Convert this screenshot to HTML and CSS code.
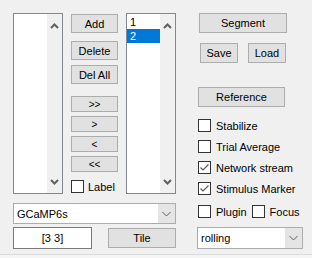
FILE: index.html
```html
<!DOCTYPE html>
<html lang="en">
<head>
  <meta charset="UTF-8">
  <title>Imaging Panel</title>
  <link rel="stylesheet" href="styles.css">
</head>
<body>

  <div class="window">
    <div class="left">
      <div class="lists">
        <div class="listbox">
          <div class="items"></div>
          <div class="scroll">
            <svg width="15" height="12" viewBox="0 0 15 12"><polyline points="4,9 7.5,5.5 11,9" fill="none" stroke="#606060" stroke-width="2"/></svg>
            <svg width="15" height="12" viewBox="0 0 15 12"><polyline points="4,3 7.5,6.5 11,3" fill="none" stroke="#606060" stroke-width="2"/></svg>
          </div>
        </div>

        <div class="buttons">
          <button class="btn tall">Add</button>
          <button class="btn tall gap-big">Delete</button>
          <button class="btn tall">Del All</button>
          <button class="btn small first">&gt;&gt;</button>
          <button class="btn small">&gt;</button>
          <button class="btn small">&lt;</button>
          <button class="btn small">&lt;&lt;</button>
          <label class="check label-check"><span class="box"></span>Label</label>
        </div>

        <div class="listbox">
          <div class="items">
            <div class="item">1</div>
            <div class="item selected">2</div>
          </div>
          <div class="scroll">
            <svg width="15" height="12" viewBox="0 0 15 12"><polyline points="4,9 7.5,5.5 11,9" fill="none" stroke="#606060" stroke-width="2"/></svg>
            <svg width="15" height="12" viewBox="0 0 15 12"><polyline points="4,3 7.5,6.5 11,3" fill="none" stroke="#606060" stroke-width="2"/></svg>
          </div>
        </div>
      </div>

      <div class="select wide">
        <span class="select-text">GCaMP6s</span>
        <span class="select-arrow">
          <svg width="9" height="6" viewBox="0 0 9 6"><polyline points="0.5,1 4.5,5 8.5,1" fill="none" stroke="#606060" stroke-width="1"/></svg>
        </span>
      </div>

      <div class="tile-row">
        <div class="field">[3 3]</div>
        <button class="btn tile">Tile</button>
      </div>
    </div>

    <div class="right">
      <button class="btn segment">Segment</button>
      <div class="save-row">
        <button class="btn save">Save</button>
        <button class="btn load">Load</button>
      </div>
      <button class="btn reference">Reference</button>

      <div class="checks">
        <label class="check"><span class="box"></span>Stabilize</label>
        <label class="check"><span class="box"></span>Trial Average</label>
        <label class="check"><span class="box checked"><svg width="11" height="11" viewBox="0 0 11 11"><polyline points="1.5,5.5 4,8 9.5,2.5" fill="none" stroke="#5a5a5a" stroke-width="1.2"/></svg></span>Network stream</label>
        <label class="check"><span class="box checked"><svg width="11" height="11" viewBox="0 0 11 11"><polyline points="1.5,5.5 4,8 9.5,2.5" fill="none" stroke="#5a5a5a" stroke-width="1.2"/></svg></span>Stimulus Marker</label>
        <div class="check-pair">
          <label class="check"><span class="box"></span>Plugin</label>
          <label class="check"><span class="box"></span>Focus</label>
        </div>
      </div>

      <div class="select rolling">
        <span class="select-text">rolling</span>
        <span class="select-arrow">
          <svg width="9" height="6" viewBox="0 0 9 6"><polyline points="0.5,1 4.5,5 8.5,1" fill="none" stroke="#606060" stroke-width="1"/></svg>
        </span>
      </div>
    </div>
  </div>

</body>
</html>
```

FILE: styles.css
```css
* {
  box-sizing: border-box;
}

body {
  margin: 0;
  width: 312px;
  height: 258px;
  background: #f5f5f5;
  font-family: 'Liberation Sans', Arial, sans-serif;
  font-size: 11px;
  color: #000;
  overflow: hidden;
}

.window {
  display: flex;
  height: 255px;
  padding: 13px 0 0 13px;
  background: #f0f0f0;
  border-bottom: 1px solid #dadada;
}

.left {
  width: 163px;
  display: flex;
  flex-direction: column;
}

.lists {
  display: flex;
  height: 181px;
}

.listbox {
  width: 50px;
  height: 181px;
  border: 1px solid #828790;
  background: #fff;
  display: flex;
}

.items {
  flex: 1;
  padding-top: 1px;
}

.item {
  height: 14px;
  line-height: 14px;
  padding-left: 3px;
}

.item.selected {
  background: #0078d7;
  color: #fff;
}

.scroll {
  width: 15px;
  background: #f0f0f0;
  display: flex;
  flex-direction: column;
  justify-content: space-between;
  padding: 5px 0 4px;
}

.scroll svg {
  display: block;
}

.btn {
  font: inherit;
  color: #000;
  background: #e1e1e1;
  border: 1px solid #adadad;
  padding: 0;
  margin: 0;
  display: flex;
  align-items: center;
  justify-content: center;
}

.buttons {
  width: 47px;
  margin: 0 8px;
  padding-top: 1px;
  display: flex;
  flex-direction: column;
}

.buttons .tall {
  width: 47px;
  height: 19px;
  margin-bottom: 5px;
}

.buttons .gap-big {
  margin-top: 3px;
}

.buttons .small {
  width: 47px;
  height: 16px;
  margin-top: 4px;
  font-size: 10px;
}

.buttons .small.first {
  margin-top: 7px;
}

.check {
  display: flex;
  align-items: center;
  height: 13px;
  white-space: nowrap;
}

.box {
  width: 13px;
  height: 13px;
  border: 1px solid #333;
  background: #fff;
  margin-right: 5px;
  display: flex;
  align-items: center;
  justify-content: center;
}

.label-check {
  margin-top: 8px;
}

.label-check .box {
  margin-right: 4px;
}

.select {
  display: flex;
  background: #fff;
  border: 1px solid #adadad;
}

.select-text {
  flex: 1;
  display: flex;
  align-items: center;
  padding-left: 3px;
}

.select-arrow {
  width: 17px;
  background: #e5e5e5;
  display: flex;
  align-items: center;
  justify-content: center;
}

.select.wide {
  width: 163px;
  height: 21px;
  margin-top: 9px;
}

.tile-row {
  display: flex;
  align-items: center;
  justify-content: space-between;
  margin-top: 3px;
}

.field {
  width: 79px;
  height: 22px;
  background: #fff;
  border: 1px solid #7a7a7a;
  display: flex;
  align-items: center;
  justify-content: center;
}

.tile {
  width: 68px;
  height: 20px;
}

.right {
  margin-left: 21px;
  display: flex;
  flex-direction: column;
  align-items: flex-start;
}

.segment {
  width: 88px;
  height: 20px;
  margin-left: 2px;
}

.save-row {
  display: flex;
  margin-top: 10px;
}

.save {
  width: 38px;
  height: 20px;
  margin-left: 3px;
}

.load {
  width: 38px;
  height: 20px;
  margin-left: 10px;
}

.reference {
  width: 87px;
  height: 20px;
  margin-top: 24px;
  margin-left: 1px;
}

.checks {
  margin-top: 12px;
  margin-left: 1px;
  display: flex;
  flex-direction: column;
  gap: 8px;
}

.check-pair {
  display: flex;
  gap: 5px;
  margin-top: 2px;
}

.select.rolling {
  width: 106px;
  height: 22px;
  margin-top: 9px;
}
```
